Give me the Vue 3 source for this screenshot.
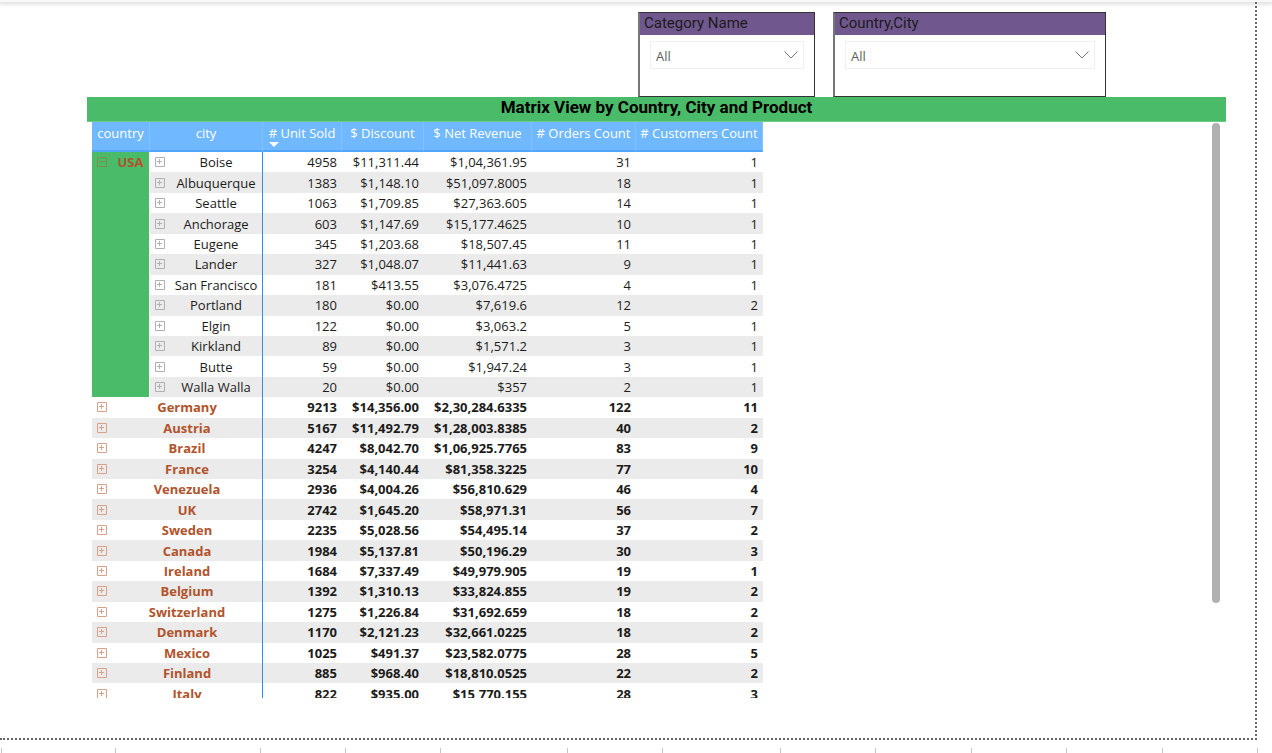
<script setup>
const slicers = [
  { id: 'category', label: 'Category Name', wide: false },
  { id: 'country-city', label: 'Country,City', wide: true },
]

const columns = ['country', 'city', '# Unit Sold', '$ Discount', '$ Net Revenue', '# Orders Count', '# Customers Count']

const cities = [
  ['Boise', '4958', '$11,311.44', '$1,04,361.95', '31', '1'],
  ['Albuquerque', '1383', '$1,148.10', '$51,097.8005', '18', '1'],
  ['Seattle', '1063', '$1,709.85', '$27,363.605', '14', '1'],
  ['Anchorage', '603', '$1,147.69', '$15,177.4625', '10', '1'],
  ['Eugene', '345', '$1,203.68', '$18,507.45', '11', '1'],
  ['Lander', '327', '$1,048.07', '$11,441.63', '9', '1'],
  ['San Francisco', '181', '$413.55', '$3,076.4725', '4', '1'],
  ['Portland', '180', '$0.00', '$7,619.6', '12', '2'],
  ['Elgin', '122', '$0.00', '$3,063.2', '5', '1'],
  ['Kirkland', '89', '$0.00', '$1,571.2', '3', '1'],
  ['Butte', '59', '$0.00', '$1,947.24', '3', '1'],
  ['Walla Walla', '20', '$0.00', '$357', '2', '1'],
]

const countries = [
  ['Germany', '9213', '$14,356.00', '$2,30,284.6335', '122', '11'],
  ['Austria', '5167', '$11,492.79', '$1,28,003.8385', '40', '2'],
  ['Brazil', '4247', '$8,042.70', '$1,06,925.7765', '83', '9'],
  ['France', '3254', '$4,140.44', '$81,358.3225', '77', '10'],
  ['Venezuela', '2936', '$4,004.26', '$56,810.629', '46', '4'],
  ['UK', '2742', '$1,645.20', '$58,971.31', '56', '7'],
  ['Sweden', '2235', '$5,028.56', '$54,495.14', '37', '2'],
  ['Canada', '1984', '$5,137.81', '$50,196.29', '30', '3'],
  ['Ireland', '1684', '$7,337.49', '$49,979.905', '19', '1'],
  ['Belgium', '1392', '$1,310.13', '$33,824.855', '19', '2'],
  ['Switzerland', '1275', '$1,226.84', '$31,692.659', '18', '2'],
  ['Denmark', '1170', '$2,121.23', '$32,661.0225', '18', '2'],
  ['Mexico', '1025', '$491.37', '$23,582.0775', '28', '5'],
  ['Finland', '885', '$968.40', '$18,810.0525', '22', '2'],
  ['Italy', '822', '$935.00', '$15,770.155', '28', '3'],
]

const tabWidths = [1, 114, 145, 85, 95, 127, 95, 118, 95, 96, 95, 96, 95]
</script>

<template>
  <div class="page">
    <div class="ribbon-edge"></div>
    <main class="canvas">
      <section class="slicers">
        <div v-for="s in slicers" :key="s.id" class="slicer" :class="{ wide: s.wide }">
          <label class="slicer-title" :for="s.id">{{ s.label }}</label>
          <div class="combo">
            <select :id="s.id">
              <option>All</option>
            </select>
            <svg class="chevron" viewBox="0 0 14 8" width="14" height="8" aria-hidden="true">
              <path d="M0.5 0.5 L7 7 L13.5 0.5" />
            </svg>
          </div>
        </div>
      </section>

      <section class="matrix">
        <h1>Matrix View by Country, City and Product</h1>
        <div class="viewport">
          <table>
            <colgroup>
              <col class="c-country" />
              <col class="c-city" />
              <col class="c-units" />
              <col class="c-discount" />
              <col class="c-revenue" />
              <col class="c-orders" />
              <col class="c-customers" />
            </colgroup>
            <thead>
              <tr>
                <th v-for="(c, i) in columns" :key="c" scope="col">
                  {{ c }}
                  <svg v-if="i === 2" class="sort" viewBox="0 0 10 5" width="10" height="5" aria-hidden="true">
                    <path d="M0 0 H10 L5 5 Z" />
                  </svg>
                </th>
              </tr>
            </thead>
            <tbody>
              <tr v-for="(row, i) in cities" :key="row[0]">
                <th v-if="i === 0" class="open" :rowspan="cities.length" scope="rowgroup">
                  <div class="name">
                    <button type="button" aria-label="Collapse USA">
                      <svg viewBox="0 0 10 10" width="10" height="10"><path d="M0.5 0.5 H9.5 V9.5 H0.5 Z M2 4.5 H8" /></svg>
                    </button>
                    <span>USA</span>
                  </div>
                </th>
                <th class="head city" scope="row">
                  <div class="name">
                    <button type="button" :aria-label="'Expand ' + row[0]">
                      <svg viewBox="0 0 10 10" width="10" height="10"><path d="M0.5 0.5 H9.5 V9.5 H0.5 Z M2 4.5 H7 M4.5 2 V7" /></svg>
                    </button>
                    <span>{{ row[0] }}</span>
                  </div>
                </th>
                <td v-for="(v, j) in row.slice(1)" :key="j">{{ v }}</td>
              </tr>
              <tr v-for="row in countries" :key="row[0]" class="total">
                <th class="head" colspan="2" scope="row">
                  <div class="name">
                    <button type="button" :aria-label="'Expand ' + row[0]">
                      <svg viewBox="0 0 10 10" width="10" height="10"><path d="M0.5 0.5 H9.5 V9.5 H0.5 Z M2 4.5 H7 M4.5 2 V7" /></svg>
                    </button>
                    <span>{{ row[0] }}</span>
                  </div>
                </th>
                <td v-for="(v, j) in row.slice(1)" :key="j">{{ v }}</td>
              </tr>
            </tbody>
          </table>
          <div class="scrollbar"></div>
        </div>
      </section>
    </main>
    <footer class="tabs">
      <span v-for="(w, i) in tabWidths" :key="i" class="tab" :style="{ width: w + 'px' }"></span>
    </footer>
  </div>
</template>

<style>
body {
  background: #fff;
}
</style>

<style scoped>
* {
  box-sizing: border-box;
}

.page {
  display: flex;
  flex-direction: column;
  height: 100vh;
  overflow: hidden;
  font-family: "Open Sans", "Noto Sans", sans-serif;
  font-size: 13px;
  color: #1c1b1a;
}

.ribbon-edge {
  flex: none;
  height: 2px;
  background: #f8f8f8;
  box-shadow: 0 1px 4px 1px rgba(0, 0, 0, 0.16);
}

.canvas {
  display: flex;
  flex-direction: column;
  flex: 1;
  min-height: 0;
  margin-right: 15px;
  padding: 10px 29px 40px 87px;
  border-right: 2px dotted #666;
  border-bottom: 2px dotted #666;
}

.slicers {
  display: flex;
  flex: none;
  gap: 18px;
  margin-left: 551px;
}

.slicer {
  flex: none;
  width: 177px;
  height: 85px;
  border: 1px solid #333;
  border-left: 2px solid #777;
}

.slicer.wide {
  width: 273px;
}

.slicer-title {
  display: block;
  height: 22px;
  padding-left: 4px;
  background: #70588f;
  font-family: Roboto, sans-serif;
  font-size: 15px;
  line-height: 20px;
}

.combo {
  display: flex;
  align-items: center;
  height: 28px;
  margin: 6px 10px 0;
  border: 1px solid #f0f0f0;
}

select {
  flex: 1;
  height: 100%;
  padding: 2px 5px 0;
  border: 0;
  background: transparent;
  appearance: none;
  color: #605e5c;
  font: inherit;
}

.chevron {
  margin-right: 5px;
  fill: none;
  stroke: #777;
  pointer-events: none;
}

.matrix {
  display: flex;
  flex-direction: column;
  flex: 1;
  min-height: 0;
}

h1 {
  flex: none;
  height: 25px;
  margin: 0;
  background: #4abc69;
  border-bottom: 1px solid #6ccb86;
  color: #000;
  font-family: Roboto, sans-serif;
  font-size: 17px;
  font-weight: 700;
  line-height: 21px;
  text-align: center;
}

.viewport {
  display: flex;
  justify-content: space-between;
  align-items: flex-start;
  flex: 1;
  min-height: 0;
  padding: 0 6px 0 5px;
  overflow: hidden;
}

.scrollbar {
  width: 8px;
  height: 480px;
  margin-top: 1px;
  border-radius: 4px;
  background: #b0b0b0;
}

table {
  width: 671px;
  height: 582px;
  border-collapse: separate;
  border-spacing: 0;
  table-layout: fixed;
}

.c-country { width: 58px; }
.c-city { width: 113px; }
.c-units { width: 79px; }
.c-discount { width: 82px; }
.c-revenue { width: 108px; }
.c-orders { width: 104px; }
.c-customers { width: 127px; }

th,
td {
  padding: 0;
  white-space: nowrap;
  line-height: 18px;
}

thead th {
  position: relative;
  height: 30px;
  padding-top: 2px;
  border-right: 1px solid #83c2ff;
  border-bottom: 2px solid #4fa6fb;
  background: #70b8ff;
  color: #fff;
  font-weight: 400;
  text-align: center;
  vertical-align: top;
}

.sort {
  position: absolute;
  left: 6px;
  bottom: 3px;
  fill: #fff;
}

td {
  padding-right: 5px;
  text-align: right;
}

tbody tr:nth-child(even) td,
tbody tr:nth-child(even) .head {
  background: #ebebeb;
}

.head {
  border-right: 1px solid #2b90e8;
}

.city {
  font-weight: 400;
}

.total,
.open {
  font-weight: 700;
}

.total .name,
.open .name {
  color: #b2532b;
}

.open {
  background: #4abc69;
  border-right: 1px solid #fff;
  vertical-align: top;
  padding-top: 1px;
}

.name {
  display: flex;
  align-items: center;
  gap: 5px;
  padding-left: 5px;
}

.name span {
  flex: 1;
  text-align: center;
}

button {
  flex: none;
  display: flex;
  width: 10px;
  height: 10px;
  padding: 0;
  border: 0;
  background: transparent;
}

button svg {
  fill: none;
  stroke: #b0b0b0;
}

.total button svg {
  stroke: #dca088;
}

.open button svg {
  stroke: #7f8a4b;
}

.tabs {
  display: flex;
  flex: none;
  height: 13px;
  padding: 8px 0 0 1px;
}

.tab {
  flex: none;
  height: 5px;
  border-right: 1px solid #c4c4c4;
}
</style>
